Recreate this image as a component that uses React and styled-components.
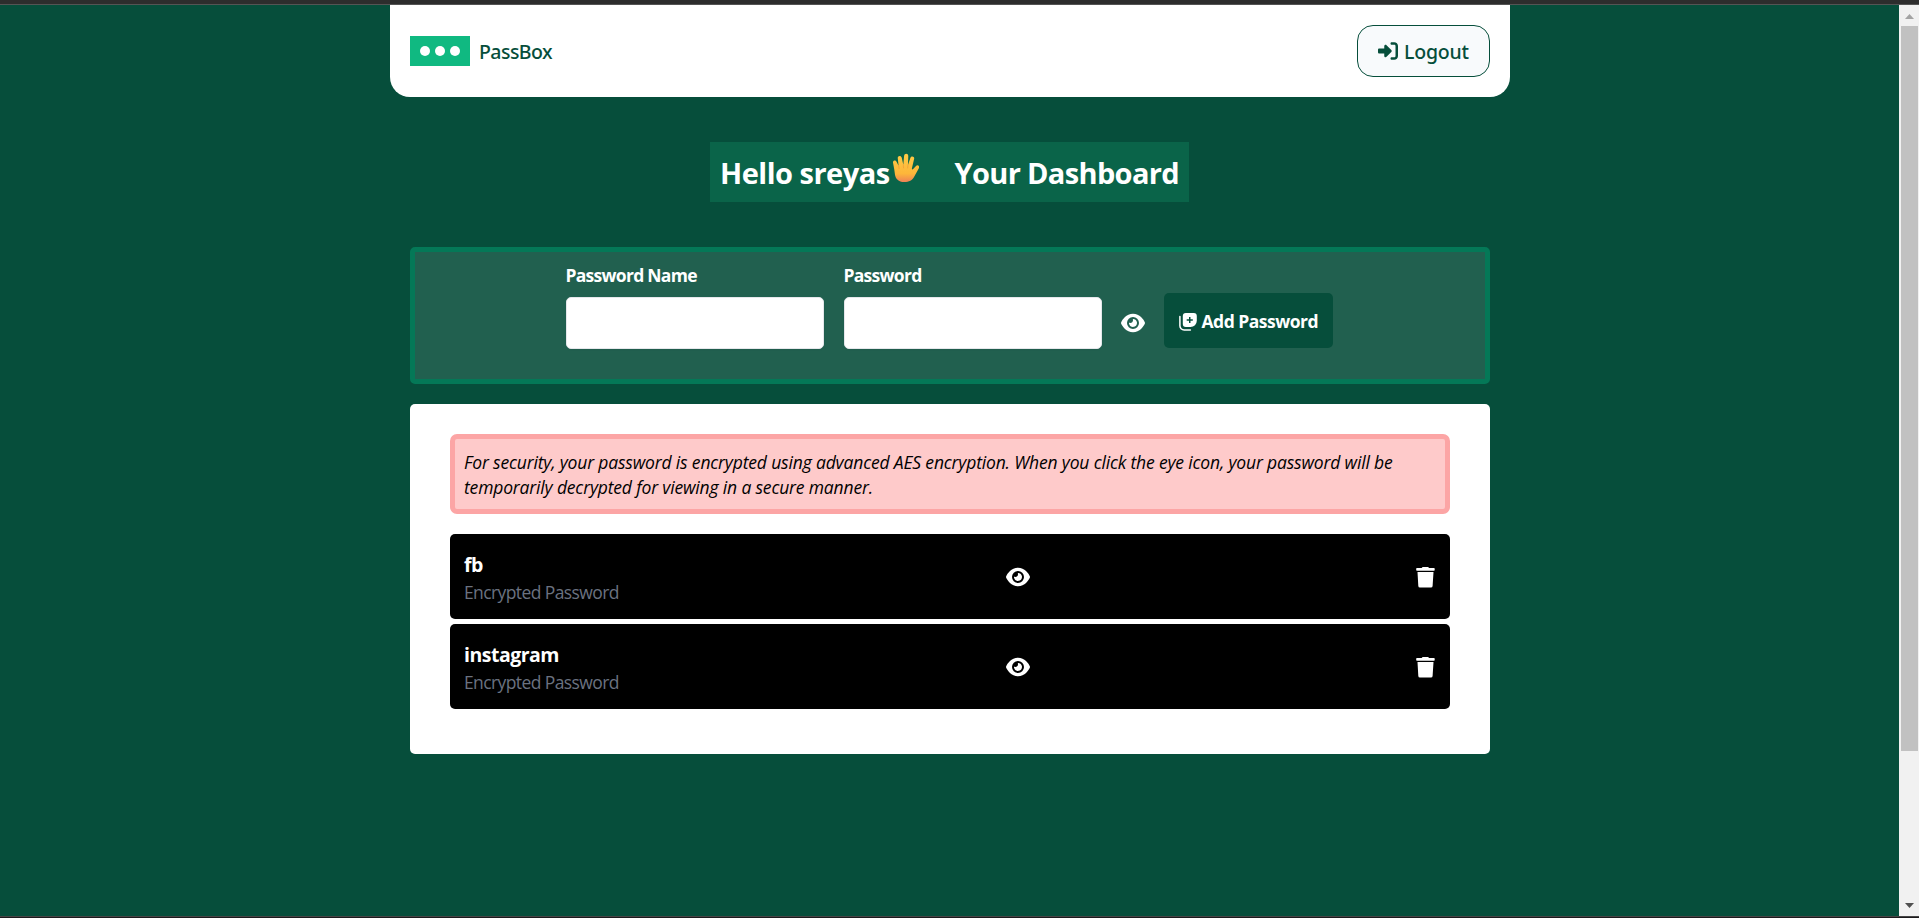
import React from 'react';
import styled, { createGlobalStyle } from 'styled-components';
import { FaEye, FaRightToBracket } from 'react-icons/fa6';

const GlobalStyle = createGlobalStyle`
  *, *::before, *::after { box-sizing: border-box; }
  body {
    margin: 0;
    overflow: hidden;
    background: #064e3b;
    color: #fff;
    font-family: "Open Sans", "Noto Sans", sans-serif;
  }
`;

const Window = styled.div`
  display: flex;
  flex-direction: column;
  height: 918px;
  border-top: 4px solid #2d2d2d;
  border-bottom: 1px solid #1c1a1c;
`;

const Viewport = styled.div`
  flex: 1;
  display: flex;
  border-top: 1px solid #545454;
  border-bottom: 1px solid #454545;
`;

const Page = styled.main`
  flex: 1;
  display: flex;
  flex-direction: column;
  align-items: center;
  padding-left: 1px;
  background: #064e3b;
`;

const ScrollTrack = styled.div`
  width: 20px;
  display: flex;
  flex-direction: column;
  align-items: center;
  background: #f1f1f1;
`;

const ScrollArrow = styled.svg`
  display: block;
  width: 20px;
  height: 21px;
  flex: none;
  fill: ${(p) => (p.$dim ? '#a3a3a3' : '#505050')};
`;

const ScrollThumb = styled.div`
  width: 17px;
  height: 725px;
  margin-bottom: auto;
  margin-left: 1px;
  background: #c1c1c1;
`;

const Header = styled.header`
  width: 1120px;
  height: 92px;
  display: flex;
  align-items: center;
  justify-content: space-between;
  padding: 0 20px;
  background: #fff;
  color: #064e3b;
  border-radius: 0 0 20px 20px;
`;

const Brand = styled.div`
  display: flex;
  align-items: center;
  gap: 9px;
`;

const LogoBox = styled.div`
  width: 60px;
  height: 30px;
  display: flex;
  align-items: center;
  justify-content: center;
  gap: 5px;
  background: #10b981;
`;

const LogoDot = styled.span`
  width: 10px;
  height: 10px;
  border-radius: 50%;
  background: #fff;
`;

const Label = styled.span`
  font-size: ${(p) => p.$size}px;
  font-weight: ${(p) => p.$weight || 400};
  line-height: ${(p) => p.$line}px;
  letter-spacing: ${(p) => p.$track || 0}px;
  white-space: nowrap;
`;

const HeaderLabel = styled(Label)`
  font-family: "Noto Sans", "Open Sans", sans-serif;
  padding-top: 2px;
`;

const LogoutButton = styled.button`
  height: 52px;
  width: 133px;
  display: flex;
  align-items: center;
  gap: 6px;
  padding: 0 0 0 20px;
  border: 1px solid #064e3b;
  border-radius: 16px;
  background: #f8fafc;
  color: #064e3b;
  font: inherit;
`;

const Greeting = styled.h1`
  width: 479px;
  height: 60px;
  display: flex;
  align-items: center;
  margin: 45px 1px 45px 0;
  padding: 2px 10px 0;
  background: #0a6449;
`;

const Hand = styled.svg`
  width: 28px;
  height: 30px;
  margin: -10px 35px 0 2px;
`;

const FormPanel = styled.form`
  width: 1080px;
  height: 137px;
  display: flex;
  justify-content: center;
  align-items: flex-start;
  padding: 11px 2px 0 0;
  border: 5px solid #047857;
  border-radius: 5px;
  background: #21604f;
`;

const Field = styled.label`
  width: 258px;
  margin-right: 20px;
  display: flex;
  flex-direction: column;
  gap: 9px;
`;

const Input = styled.input`
  width: 100%;
  height: 52px;
  border: 1px solid #e5e7eb;
  border-radius: 5px;
  background: #fff;
  box-shadow: 0 1px 2px rgba(0, 0, 0, 0.05);
`;

const IconSlot = styled.span`
  display: flex;
  font-size: 24px;
  color: #fff;
  margin: ${(p) => p.$margin || 0};
`;

const AddButton = styled.button`
  width: 169px;
  height: 55px;
  display: flex;
  align-items: center;
  gap: 5px;
  margin-top: 30px;
  padding: 2px 0 0 15px;
  border: 0;
  border-radius: 5px;
  background: #064e3b;
  color: #fff;
  font: inherit;
`;

const VaultCard = styled.section`
  width: 1080px;
  height: 350px;
  margin-top: 20px;
  padding: 30px 40px;
  border-radius: 5px;
  background: #fff;
`;

const Notice = styled.p`
  height: 80px;
  margin: 0 0 20px;
  padding: 11px 10px 0 9px;
  border: 5px solid #fca5a5;
  border-radius: 7px;
  background: #fecaca;
  color: #000;
  font-size: 17.5px;
  font-style: italic;
  line-height: 25px;
  letter-spacing: -0.165px;
`;

const Entry = styled.article`
  height: 85px;
  margin-bottom: 5px;
  display: grid;
  grid-template-columns: 542px 1fr auto;
  align-items: center;
  padding: 2px 15px 0 14px;
  border-radius: 5px;
  background: #000;
`;

const EntryText = styled.div`
  display: flex;
  flex-direction: column;
  padding-top: 2px;
`;

const Muted = styled(Label)`
  color: #6b7280;
`;

function CopyPlusIcon() {
  return (
    <svg width="18" height="18" viewBox="0 0 18 18" fill="none">
      <path
        fillRule="evenodd"
        fill="#fff"
        d="M6.800 0h8A3 3 0 0 1 17.800 3v4.800a6.200 6.200 0 0 1-6.200 6.200H6.800a3 3 0 0 1-3-3V3a3 3 0 0 1 3-3ZM10 4v2.200H7.700v1.500H10V10h1.500V7.700h2.300V6.200h-2.300V4Z"
      />
      <path d="M.9 3.600v9.200a4.200 4.200 0 0 0 4.200 4.200h6.300" stroke="#fff" strokeWidth="1.5" strokeLinecap="round" />
    </svg>
  );
}

function TrashIcon() {
  return (
    <svg width="19" height="21" viewBox="0 0 19 21" fill="#fff">
      <path d="M.9 1h4.800L6.600.1h5.600L13 1h5q.7 0 .7.7v1.400q0 .7-.7.7H.9q-.7 0-.7-.7V1.700q0-.7.7-.7Z" />
      <path d="M1.500 5h16l-.9 14q-.1 1.600-1.700 1.600H4q-1.600 0-1.700-1.600Z" />
    </svg>
  );
}

function RaisedHand() {
  return (
    <Hand viewBox="0 0 27 29">
      <defs>
        <linearGradient id="skin" x1="0" y1="0" x2="0" y2="1">
          <stop offset="0" stopColor="#ffcb45" />
          <stop offset="0.7" stopColor="#fdb63a" />
          <stop offset="1" stopColor="#ee8157" />
        </linearGradient>
      </defs>
      <path
        fill="url(#skin)"
        d="M2.200 16 1 9.300C.6 7 3.500 6.300 4.300 8.300L6.400 12.300 5.600 5C5.300 2.400 8.800 2 9.400 4.400L11 11.400 11.700 3C12-.1 15.800 0 15.800 3L15.500 11.500 17.900 4.600C18.700 2.300 22 3.100 21.500 5.500L19.300 15.100C19.300 16.300 20 16 20.800 15.200L23.300 12.500C24.900 11 27.300 12.700 26.200 14.500L21.800 22.500C19.700 26.500 16.600 28.200 11.900 28.200 6.200 28.200 3.400 24.500 2.900 21Z"
      />
      <path d="M6.400 12.300 6.900 15M11 11.400l.2 3M15.500 11.500l-.3 3" stroke="#f09a35" strokeWidth="0.7" strokeLinecap="round" />
    </Hand>
  );
}

const entries = ['fb', 'instagram'];

export default function App() {
  return (
    <Window>
      <GlobalStyle />
      <Viewport>
        <Page>
          <Header>
            <Brand>
              <LogoBox>
                <LogoDot />
                <LogoDot />
                <LogoDot />
              </LogoBox>
              <HeaderLabel $size={19.5} $weight={500} $line={28} $track={-0.55}>PassBox</HeaderLabel>
            </Brand>
            <LogoutButton type="button">
              <FaRightToBracket size={20} />
              <HeaderLabel $size={19.5} $weight={500} $line={28} $track={-0.2}>Logout</HeaderLabel>
            </LogoutButton>
          </Header>

          <Greeting>
            <Label $size={29} $weight={700} $line={40} $track={-0.5}>Hello sreyas</Label>
            <RaisedHand />
            <Label $size={29} $weight={700} $line={40} $track={-0.65}>Your Dashboard</Label>
          </Greeting>

          <FormPanel>
            <Field>
              <Label $size={17.5} $weight={700} $line={25} $track={-0.72}>Password Name</Label>
              <Input />
            </Field>
            <Field>
              <Label $size={17.5} $weight={700} $line={25} $track={-0.72}>Password</Label>
              <Input type="password" />
            </Field>
            <IconSlot $margin="48px 19px 0 -1px"><FaEye /></IconSlot>
            <AddButton type="button">
              <CopyPlusIcon />
              <Label $size={17.5} $weight={700} $line={25} $track={-0.5}>Add Password</Label>
            </AddButton>
          </FormPanel>

          <VaultCard>
            <Notice>
              For security, your password is encrypted using advanced AES encryption. When you click the eye icon, your password will be temporarily decrypted for viewing in a secure manner.
            </Notice>
            {entries.map((name) => (
              <Entry key={name}>
                <EntryText>
                  <Label $size={19.5} $weight={700} $line={28} $track={-0.5}>{name}</Label>
                  <Muted $size={17.5} $weight={400} $line={27} $track={-0.6}>Encrypted Password</Muted>
                </EntryText>
                <IconSlot $margin="0 0 1px"><FaEye /></IconSlot>
                <IconSlot><TrashIcon /></IconSlot>
              </Entry>
            ))}
          </VaultCard>
        </Page>
        <ScrollTrack>
          <ScrollArrow $dim viewBox="0 0 20 21"><path d="M6 14 10.5 9l4.5 5Z" /></ScrollArrow>
          <ScrollThumb />
          <ScrollArrow viewBox="0 0 20 21"><path d="M6 8h9l-4.5 5Z" /></ScrollArrow>
        </ScrollTrack>
      </Viewport>
    </Window>
  );
}
